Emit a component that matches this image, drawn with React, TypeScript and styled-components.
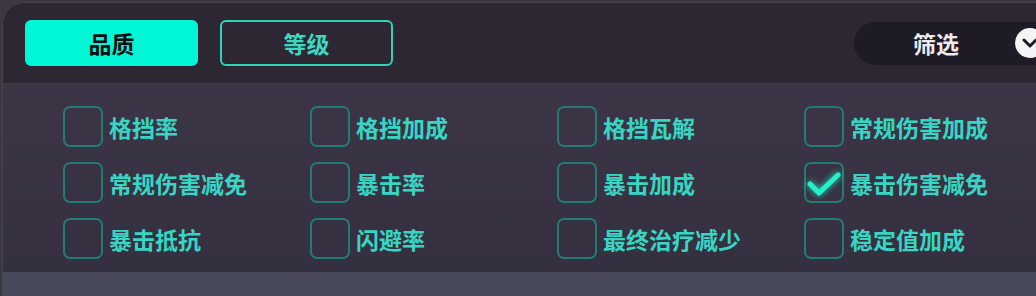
import React from "react";
import styled, { createGlobalStyle } from "styled-components";

const GlobalStyle = createGlobalStyle`
  html, body {
    margin: 0;
    padding: 0;
    width: 1036px;
    height: 296px;
    overflow: hidden;
    background-color: #3b3842;
    font-family: "Noto Sans CJK SC", "Noto Sans", sans-serif;
  }
`;

const Frame = styled.div`
  width: 1036px;
  height: 296px;
  padding: 2px 0 0 2px;
  box-sizing: border-box;
`;

const Panel = styled.div`
  height: 294px;
  display: flex;
  flex-direction: column;
  border-top-left-radius: 22px;
  border-top: 1px solid #46424e;
  border-left: 1px solid #46424e;
  overflow: hidden;
  box-sizing: border-box;
`;

const Header = styled.div`
  height: 80px;
  display: flex;
  align-items: center;
  gap: 22px;
  padding-left: 22px;
  background-color: #2c2733;
  border-bottom: 1px solid #3f3a48;
  flex-shrink: 0;
`;

const Tab = styled.button<{ $active?: boolean }>`
  width: 173px;
  height: 46px;
  box-sizing: border-box;
  display: flex;
  align-items: center;
  justify-content: center;
  border-radius: 6px;
  font-family: inherit;
  font-size: 23px;
  font-weight: 700;
  padding: 0;
  cursor: pointer;
  border: 2px solid ${(p) => (p.$active ? "#00f7d6" : "#2fd4b8")};
  background-color: ${(p) => (p.$active ? "#00f7d6" : "transparent")};
  color: ${(p) => (p.$active ? "#0b0d10" : "#3ad9c0")};
`;

const FilterPill = styled.div`
  margin-left: auto;
  margin-right: -32px;
  width: 214px;
  height: 43px;
  display: flex;
  align-items: center;
  padding-left: 59px;
  box-sizing: border-box;
  border-radius: 22px;
  background-color: #1f1b26;
  flex-shrink: 0;
`;

const FilterText = styled.span`
  color: #ecebef;
  font-size: 23px;
  font-weight: 700;
  width: 46px;
  white-space: nowrap;
`;

const Chevron = styled.span`
  margin-left: 56px;
  width: 30px;
  height: 30px;
  border-radius: 50%;
  background-color: #f4f4f6;
  display: flex;
  align-items: center;
  justify-content: center;
  flex-shrink: 0;
`;

const Body = styled.div`
  flex: 1;
  display: grid;
  grid-template-columns: repeat(4, 247px);
  grid-auto-rows: 41px;
  row-gap: 15px;
  padding: 22px 0 0 60px;
  background: linear-gradient(#3b3546, #353040);
`;

const Item = styled.label`
  display: flex;
  align-items: center;
  gap: 6px;
`;

const Box = styled.span`
  width: 40px;
  height: 41px;
  box-sizing: border-box;
  border: 2px solid #237b72;
  border-radius: 7px;
  display: flex;
  align-items: center;
  justify-content: center;
  flex-shrink: 0;
`;

const Label = styled.span`
  color: #37d6c4;
  font-size: 23px;
  font-weight: 700;
  white-space: nowrap;
`;

const Footer = styled.div`
  height: 24px;
  background-color: #474958;
  flex-shrink: 0;
`;

const items: { label: string; checked?: boolean }[] = [
  { label: "格挡率" },
  { label: "格挡加成" },
  { label: "格挡瓦解" },
  { label: "常规伤害加成" },
  { label: "常规伤害减免" },
  { label: "暴击率" },
  { label: "暴击加成" },
  { label: "暴击伤害减免", checked: true },
  { label: "暴击抵抗" },
  { label: "闪避率" },
  { label: "最终治疗减少" },
  { label: "稳定值加成" },
];

const CheckMark = () => (
  <svg width="36" height="30" viewBox="0 0 36 30" style={{ filter: "drop-shadow(0 0 3px #1de9c5)", marginTop: 4 }}>
    <path
      d="M4 14 L13 23 L32 5"
      fill="none"
      stroke="#22f2cc"
      strokeWidth="5"
      strokeLinecap="round"
      strokeLinejoin="round"
    />
  </svg>
);

export default function App() {
  return (
    <>
      <GlobalStyle />
      <Frame>
        <Panel>
          <Header>
            <Tab $active>品质</Tab>
            <Tab>等级</Tab>
            <FilterPill>
              <FilterText>筛选</FilterText>
              <Chevron>
                <svg width="18" height="18" viewBox="0 0 18 18">
                  <path
                    d="M3 6 L9 12 L15 6"
                    fill="none"
                    stroke="#1c1a22"
                    strokeWidth="3"
                    strokeLinecap="round"
                    strokeLinejoin="round"
                  />
                </svg>
              </Chevron>
            </FilterPill>
          </Header>
          <Body>
            {items.map((it) => (
              <Item key={it.label}>
                <Box>{it.checked && <CheckMark />}</Box>
                <Label>{it.label}</Label>
              </Item>
            ))}
          </Body>
          <Footer />
        </Panel>
      </Frame>
    </>
  );
}
